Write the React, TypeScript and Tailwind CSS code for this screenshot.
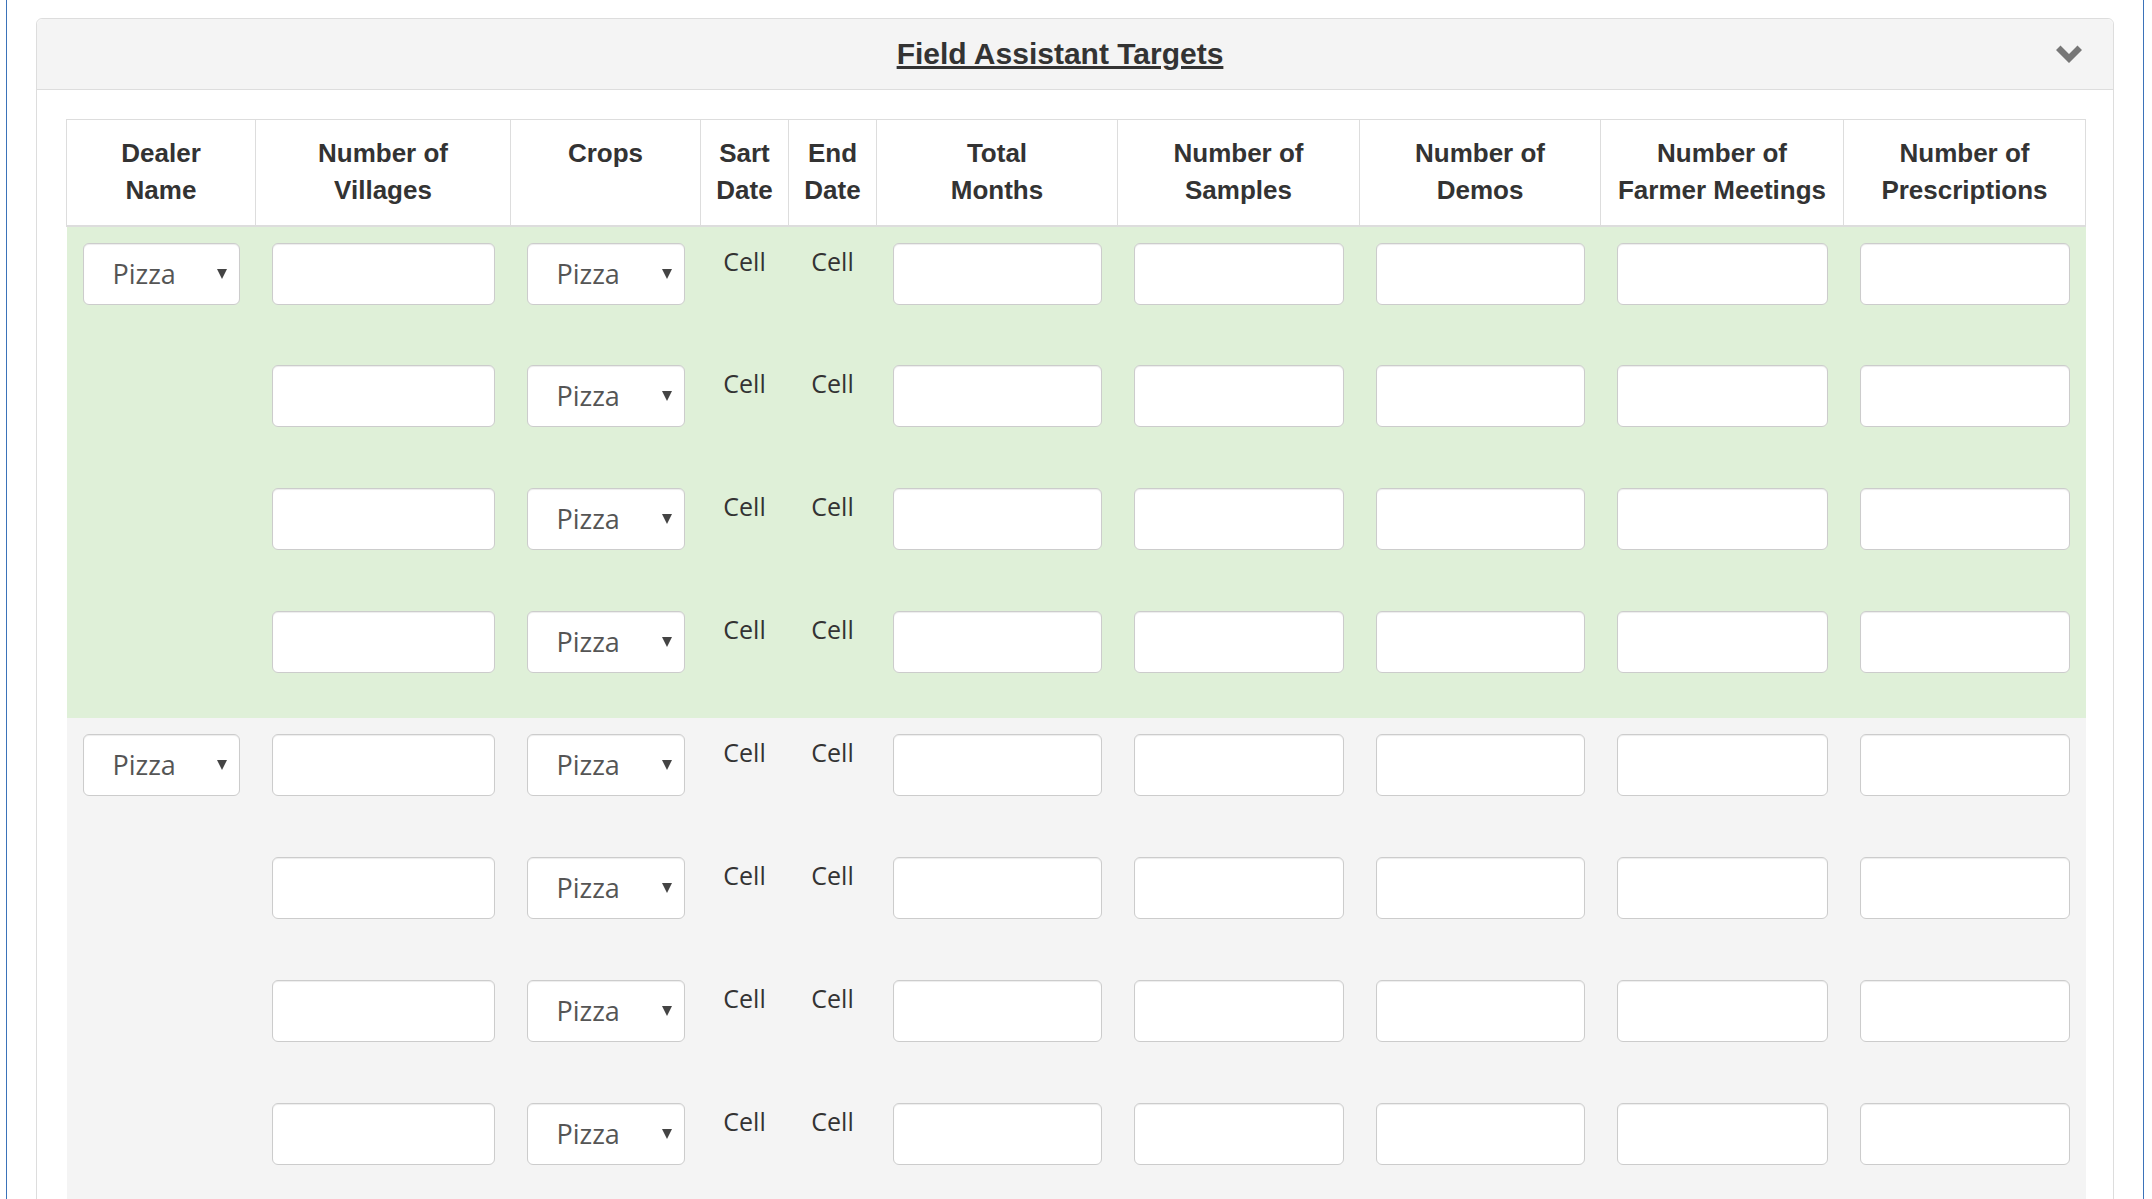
import React from 'react'

const columns = [
  { key: 'dealer', width: 'w-[189px]', lines: ['Dealer', 'Name'] },
  { key: 'villages', width: 'w-[255px]', lines: ['Number of', 'Villages'] },
  { key: 'crops', width: 'w-[190px]', lines: ['Crops'] },
  { key: 'start', width: 'w-[88px]', lines: ['Sart', 'Date'] },
  { key: 'end', width: 'w-[88px]', lines: ['End', 'Date'] },
  { key: 'months', width: 'w-[241px]', lines: ['Total', 'Months'] },
  { key: 'samples', width: 'w-[242px]', lines: ['Number of', 'Samples'] },
  { key: 'demos', width: 'w-[241px]', lines: ['Number of', 'Demos'] },
  { key: 'meetings', width: 'w-[243px]', lines: ['Number of', 'Farmer Meetings'] },
  { key: 'prescriptions', width: 'w-[242px]', lines: ['Number of', 'Prescriptions'] },
]

const groups = [
  { id: 1, bg: 'bg-[#dff0d8]' },
  { id: 2, bg: 'bg-[#f4f4f4]' },
]

const Chevron = () => (
  <svg width="26" height="19" viewBox="0 0 26 19" aria-hidden="true">
    <polygon points="0,5 4.5,0.5 13,9 21.5,0.5 26,5 13,18" fill="#777" />
  </svg>
)

const SelectBox = ({ value }: { value: string }) => (
  <div className="flex h-[62px] w-full items-center justify-between rounded-[6px] border border-[#ccc] bg-white pl-[29px] pr-[12px] font-['Open_Sans',sans-serif] text-[27px] text-[#555] shadow-[inset_0_1px_1px_rgba(0,0,0,0.075)]">
    <span>{value}</span>
    <svg width="10" height="10" viewBox="0 0 10 10" aria-hidden="true">
      <polygon points="0,0 10,0 5,10" fill="#444" />
    </svg>
  </div>
)

const TextBox = () => (
  <input
    type="text"
    readOnly
    className="block h-[62px] w-full rounded-[6px] border border-[#ccc] bg-white shadow-[inset_0_1px_1px_rgba(0,0,0,0.075)] outline-none"
  />
)

const BodyRow = ({ first, bg }: { first: boolean; bg: string }) => {
  const cell = 'h-[123px] px-4 pt-4 align-top'
  const text = 'h-[123px] pt-4 text-center align-top text-[25px] leading-[36px] text-[#333]'
  return (
    <tr className={bg}>
      <td className={cell}>{first && <SelectBox value="Pizza" />}</td>
      <td className={cell}><TextBox /></td>
      <td className={cell}><SelectBox value="Pizza" /></td>
      <td className={text}>Cell</td>
      <td className={text}>Cell</td>
      <td className={cell}><TextBox /></td>
      <td className={cell}><TextBox /></td>
      <td className={cell}><TextBox /></td>
      <td className={cell}><TextBox /></td>
      <td className={cell}><TextBox /></td>
    </tr>
  )
}

export default function App() {
  return (
    <div className="min-h-screen bg-white font-['Open_Sans',sans-serif]">
      <div className="ml-[6px] mr-[8px] border-x border-[#3b73b9] px-[29px] pt-[18px] pb-10">
        <div className="rounded-t-[6px] border border-[#ddd] bg-white">
          <div className="flex h-[71px] items-center rounded-t-[6px] border-b border-[#ddd] bg-[#f4f4f4] px-[29px]">
            <h2 className="flex-1 text-center font-['Liberation_Sans',Arial,sans-serif] text-[30px] font-bold leading-[34px] text-[#333] underline">
              Field Assistant Targets
            </h2>
            <span className="flex w-[30px] justify-center">
              <Chevron />
            </span>
          </div>
          <div className="p-[29px]">
            <table className="w-full table-fixed border-collapse">
              <colgroup>
                {columns.map((c) => (
                  <col key={c.key} className={c.width} />
                ))}
              </colgroup>
              <thead>
                <tr>
                  {columns.map((c) => (
                    <th
                      key={c.key}
                      className="border border-b-2 border-[#ddd] px-1 pt-[15px] pb-[16px] text-center align-top font-['Liberation_Sans',Arial,sans-serif] text-[26px] font-bold leading-[37px] whitespace-nowrap text-[#333]"
                    >
                      {c.lines.map((line, i) => (
                        <React.Fragment key={line}>
                          {i > 0 && <br />}
                          {line}
                        </React.Fragment>
                      ))}
                    </th>
                  ))}
                </tr>
              </thead>
              <tbody>
                {groups.map((g) =>
                  [0, 1, 2, 3].map((i) => (
                    <BodyRow key={`${g.id}-${i}`} first={i === 0} bg={g.bg} />
                  ))
                )}
              </tbody>
            </table>
          </div>
        </div>
      </div>
    </div>
  )
}
